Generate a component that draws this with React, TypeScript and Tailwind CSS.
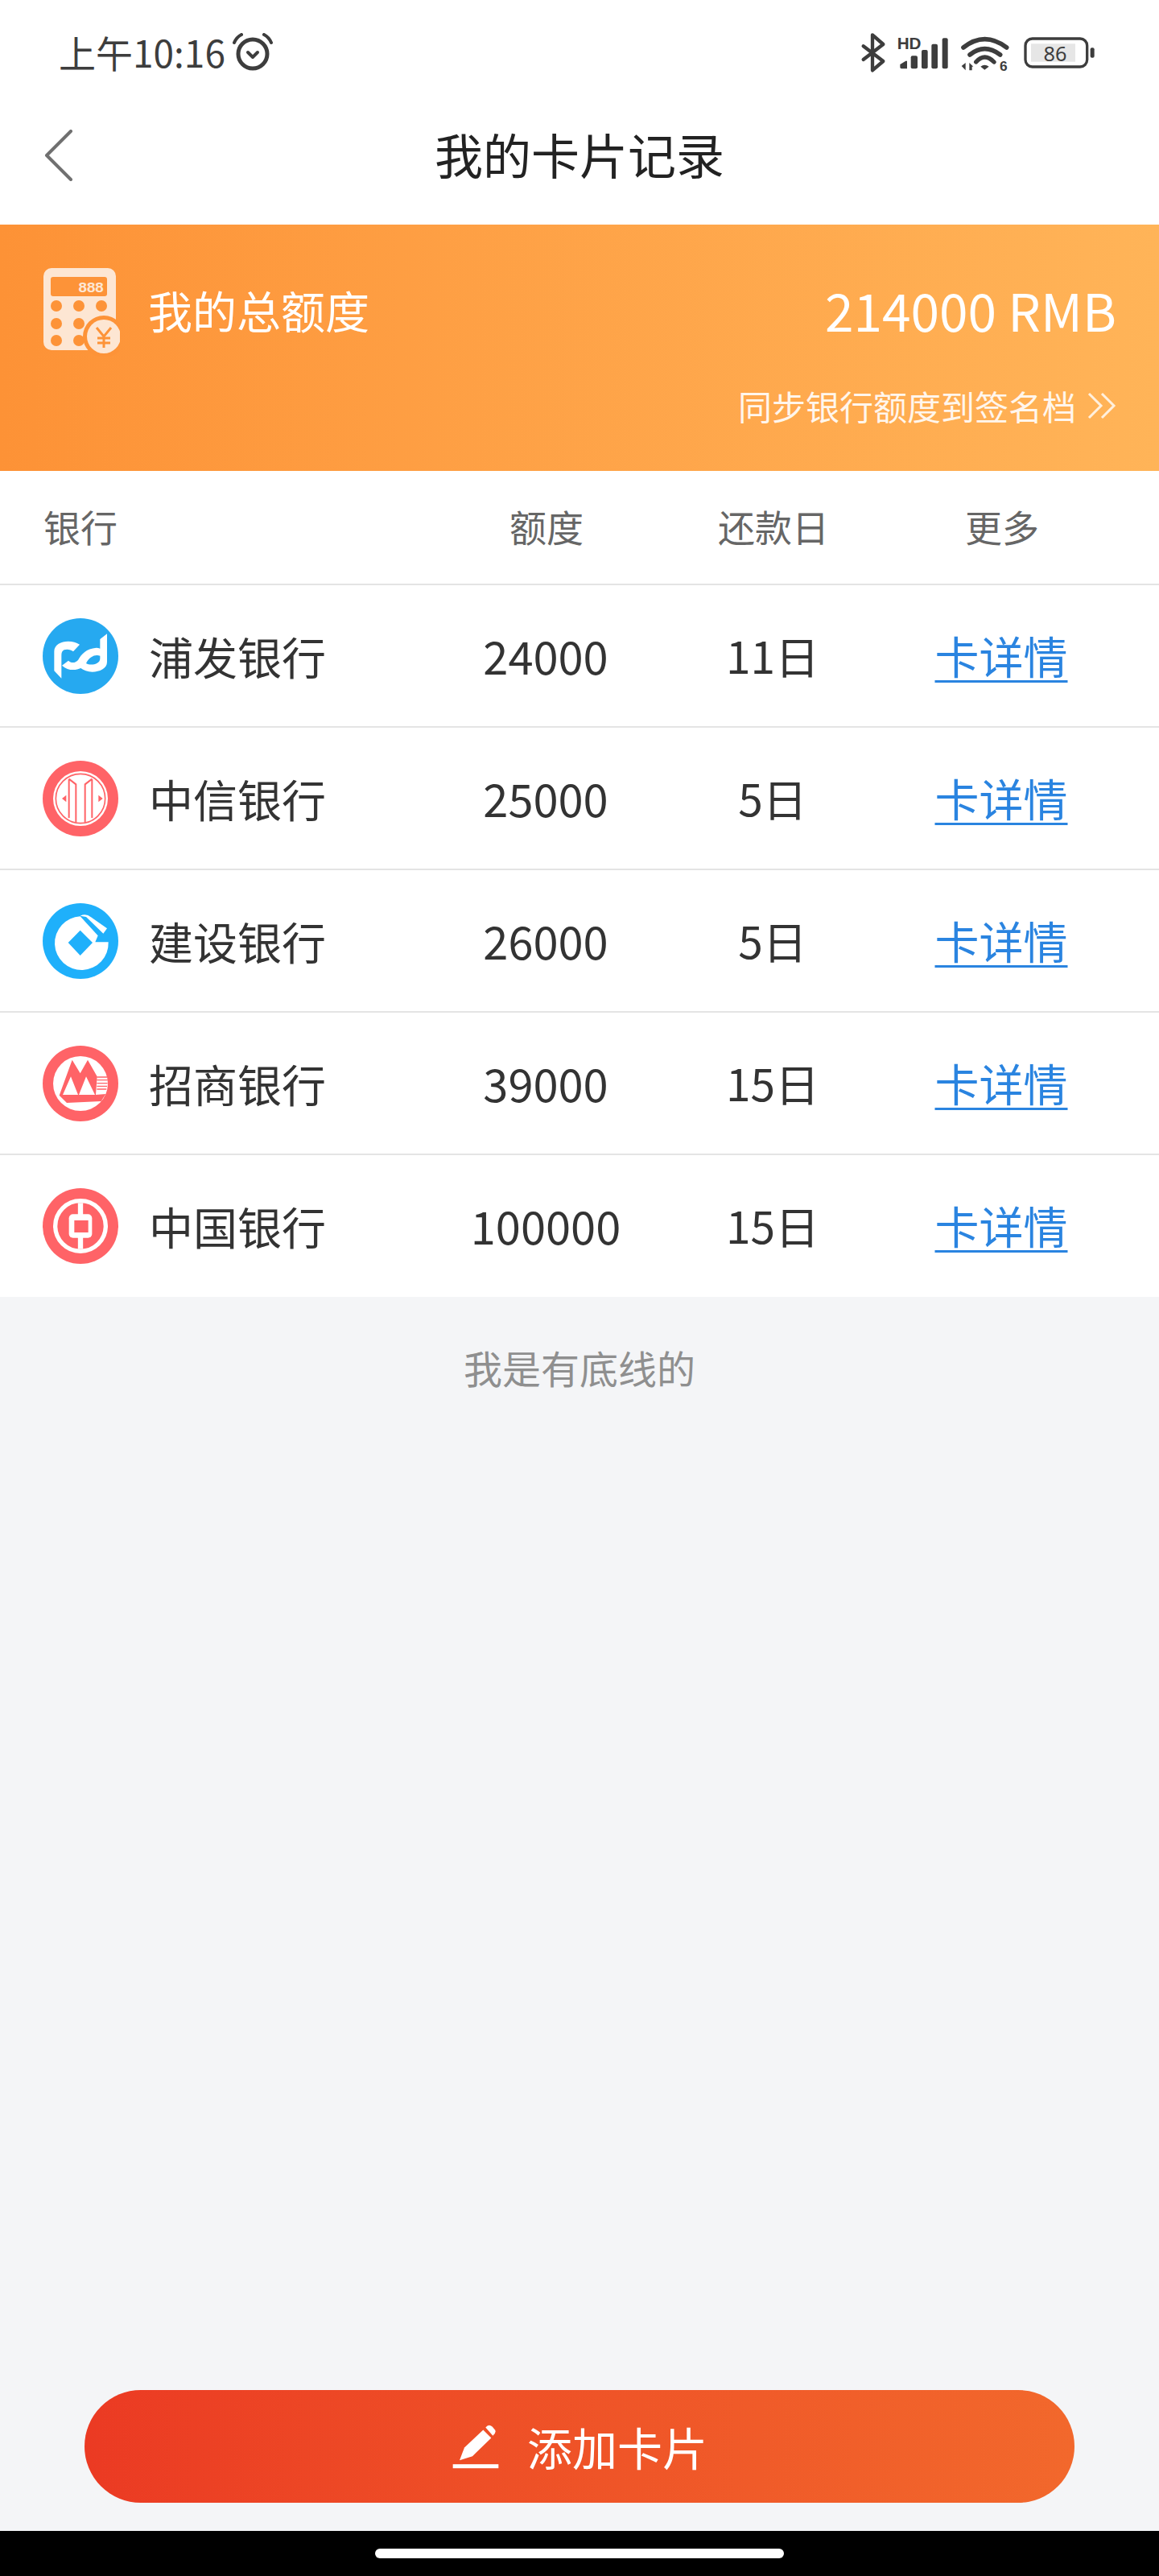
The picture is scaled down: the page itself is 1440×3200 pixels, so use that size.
import React from 'react'

const font = { fontFamily: '"Noto Sans CJK SC", "Noto Sans", sans-serif' }

function StatusIcons() {
  return (
    <svg width="480" height="120" viewBox="0 0 1440 360" fill="none" className="shrink-0">
      <path d="M338 172 412 228 372 262V130L412 165 338 222" stroke="#3d3d3d" strokeWidth="13" strokeLinecap="round" strokeLinejoin="round" />
      <text x="464" y="182" fontSize="62" fontWeight="700" fill="#3d3d3d" fontFamily="Liberation Sans">HD</text>
      <path d="M475 240 496 227H501V256H480Q475 256 475 250Z" fill="#3d3d3d" />
      <rect x="515" y="208" width="25" height="48" rx="6" fill="#3d3d3d" />
      <rect x="555" y="186" width="23" height="70" rx="6" fill="#3d3d3d" />
      <rect x="592" y="164" width="23" height="92" rx="6" fill="#3d3d3d" />
      <rect x="632" y="142" width="21" height="114" rx="6" fill="#3d3d3d" />
      <path d="M711 177Q790 115 872 177" stroke="#3d3d3d" strokeWidth="17" strokeLinecap="round" />
      <path d="M735 204Q790 160 848 204" stroke="#3d3d3d" strokeWidth="17" strokeLinecap="round" />
      <path d="M758 231Q790 195 825 231" stroke="#3d3d3d" strokeWidth="16" strokeLinecap="round" />
      <path d="M775 248Q790 236 806 248L790 260Z" fill="#3d3d3d" />
      <path d="M704 246 719 234V262ZM733 234 748 248H743V262H733Z" fill="#3d3d3d" />
      <text x="846" y="265" fontSize="52" fontWeight="700" fill="#3d3d3d" fontFamily="Liberation Sans">6</text>
      <rect x="942" y="144" width="230" height="105" rx="26" stroke="#3d3d3d" strokeWidth="10" />
      <rect x="963" y="163" width="165" height="67" fill="#e6e6e6" />
      <text x="1053" y="227" fontSize="76" textAnchor="middle" fill="#3d3d3d" fontFamily="Noto Sans">86</text>
      <rect x="1184" y="178" width="15" height="37" rx="6" fill="#3d3d3d" />
    </svg>
  )
}

function AlarmIcon() {
  return (
    <svg width="52" height="48" viewBox="287 42 52 48" fill="none" className="ml-[8px] mt-[1px] shrink-0">
      <circle cx="313" cy="68" r="18" stroke="#3d3d3d" strokeWidth="5" />
      <path d="M307 66 313 72 319 66" stroke="#3d3d3d" strokeWidth="4" strokeLinecap="round" strokeLinejoin="round" />
      <path d="M290 54Q293 47 299 44M336 54Q333 47 327 44" stroke="#3d3d3d" strokeWidth="4" strokeLinecap="round" />
    </svg>
  )
}

function CalcIcon() {
  return (
    <svg width="96" height="112" viewBox="52 330 96 112" className="shrink-0">
      <rect x="53" y="332" width="90" height="102" rx="10" fill="#fde6d3" />
      <rect x="62" y="343" width="70" height="24" rx="3" fill="#fd9338" />
      <text x="96" y="362" fontSize="19" fontWeight="700" fill="#fde6d3" fontFamily="Liberation Mono" letterSpacing="-1">888</text>
      {[379, 401, 422].map((y) =>
        [69, 97, 125].map((x) => <circle key={`${x}-${y}`} cx={x} cy={y} r="7" fill="#fd9338" />),
      )}
      <circle cx="128" cy="417" r="26" fill="#fd9338" />
      <circle cx="128" cy="417" r="21" fill="#fde6d3" />
      <path d="M119 406 128 417 137 406M128 417V431M120 419H136M120 425H136" stroke="#fd9338" strokeWidth="3" fill="none" />
    </svg>
  )
}

function PudongLogo() {
  return (
    <svg width="94" height="94" viewBox="100 82 282 282" fill="none">
      <circle cx="241" cy="223" r="141" fill="#26a9f0" />
      <path d="M143 205C143 180 170 168 195 168C212 168 225 172 238 180L214 206C205 198 190 196 180 200C172 204 170 210 170 222V306L143 278Z" fill="#fff" />
      <path d="M340 140V245C340 270 312 282 285 282C268 282 252 276 242 268C225 276 195 280 172 258L196 240C205 250 222 250 232 238C245 215 262 195 300 192C305 192 310 193 314 195V160ZM314 222C295 216 275 225 262 250C272 256 290 256 302 250C310 246 314 240 314 232Z" fill="#fff" fillRule="evenodd" />
    </svg>
  )
}

function CiticLogo() {
  return (
    <svg width="94" height="94" viewBox="100 72 282 282" fill="none">
      <circle cx="241" cy="213" r="141" fill="#ff6367" />
      <circle cx="241" cy="213" r="102" fill="#fff" />
      <circle cx="241" cy="213" r="92" stroke="#ff6367" strokeWidth="5" />
      <path d="M198 140V285M284 140V285M198 140 224 160V302M284 140 258 160V302" stroke="#ff6367" strokeWidth="6" />
      <path d="M172 213 188 200V226ZM324 213 308 200V226Z" fill="#ff6367" />
    </svg>
  )
}

function CcbLogo() {
  return (
    <svg width="94" height="94" viewBox="100 603 282 282" fill="none">
      <circle cx="241" cy="744" r="141" fill="#1fb0fb" />
      <path d="M240 652 306 724 296 748H345A100 100 0 1 1 240 652Z" fill="#fff" />
      <path d="M240 650Q262 640 280 655L340 697 326 716 262 654Z" fill="#fff" />
      <path d="M240 704 286 750 240 798 195 750Z" fill="#1fb0fb" />
    </svg>
  )
}

function CmbLogo() {
  return (
    <svg width="94" height="94" viewBox="100 55 282 282" fill="none">
      <circle cx="241" cy="196" r="141" fill="#ff6367" />
      <circle cx="241" cy="196" r="102" fill="#fff" />
      <path d="M210 108 240 158 268 108 303 170 298 238 335 235 318 262 190 268 162 240Z" fill="#ff6367" />
      <path d="M205 170 175 238H232ZM262 170 235 238H295Z" fill="#fff" />
      <path d="M302 172H340M302 183H342M302 195H342M302 206H340M302 217H338" stroke="#ff6367" strokeWidth="4" />
    </svg>
  )
}

function BocLogo() {
  return (
    <svg width="94" height="94" viewBox="100 585 282 282" fill="none">
      <circle cx="241" cy="726" r="141" fill="#ff6367" />
      <circle cx="241" cy="726" r="94" stroke="#fff" strokeWidth="16" />
      <path d="M241 640V812" stroke="#fff" strokeWidth="19" />
      <rect x="198" y="682" width="86" height="88" rx="15" fill="#fff" />
      <rect x="218" y="705" width="52" height="45" fill="#ff6367" />
    </svg>
  )
}

const banks = [
  { name: '浦发银行', limit: '24000', day: '11日', logo: <PudongLogo /> },
  { name: '中信银行', limit: '25000', day: '5日', logo: <CiticLogo /> },
  { name: '建设银行', limit: '26000', day: '5日', logo: <CcbLogo /> },
  { name: '招商银行', limit: '39000', day: '15日', logo: <CmbLogo /> },
  { name: '中国银行', limit: '100000', day: '15日', logo: <BocLogo /> },
]

export default function App() {
  return (
    <div className="flex h-[3200px] w-[1440px] flex-col overflow-hidden bg-[#f4f5f7]" style={font}>
      <header className="h-[279px] shrink-0 bg-white">
        <div className="flex h-[120px] items-center justify-between pl-[73px] text-[#3d3d3d]">
          <div className="flex items-center pt-[8px]">
            <span className="text-[46px] leading-none">上午10:16</span>
            <AlarmIcon />
          </div>
          <StatusIcons />
        </div>
        <div className="relative flex h-[146px] items-center justify-center">
          <svg width="36" height="64" viewBox="0 0 36 64" fill="none" className="absolute left-[55px] top-[41px]">
            <path d="M33 2 3 32 33 62" stroke="#707070" strokeWidth="4" strokeLinecap="round" strokeLinejoin="round" />
          </svg>
          <h1 className="mb-[4px] text-[60px] font-normal leading-none text-[#222]">我的卡片记录</h1>
        </div>
      </header>

      <section className="flex h-[306px] shrink-0 flex-col bg-gradient-to-r from-[#fd9236] to-[#ffb458] px-[53px] pt-[52px] text-white">
        <div className="flex items-start justify-between">
          <div className="flex items-center gap-[35px]">
            <CalcIcon />
            <span className="mb-[5px] text-[55px] leading-none">我的总额度</span>
          </div>
          <span className="mt-[21px] text-[64px] leading-none">214000 RMB</span>
        </div>
        <div className="mt-[40px] flex items-center justify-end gap-[14px] text-[42px] leading-none">
          <span className="text-[#fff6ec]">同步银行额度到签名档</span>
          <svg width="36" height="36" viewBox="0 0 36 36" fill="none">
            <path d="M2 3 17 18 2 33M18 3 33 18 18 33" stroke="#fff" strokeOpacity="0.8" strokeWidth="3" />
          </svg>
        </div>
      </section>

      <div className="grid h-[140px] shrink-0 grid-cols-[484px_282px_282px_286px] items-center bg-white pb-[4px] pl-[54px] text-center text-[46px] leading-none text-[#666]">
        <span className="text-left">银行</span>
        <span>额度</span>
        <span>还款日</span>
        <span>更多</span>
      </div>

      <div className="flex h-[886px] shrink-0 flex-col bg-white">
        {banks.map((b) => (
          <div
            key={b.name}
            className="grid h-[177px] shrink-0 grid-cols-[484px_282px_282px_286px] items-center border-t-[2px] border-[#e4e4e4] pl-[53px] text-center text-[55px] leading-none text-[#333]"
          >
            <div className="flex items-center gap-[38px] text-left">
              {b.logo}
              <span>{b.name}</span>
            </div>
            <span className="pb-[2px] text-[56px]">{b.limit}</span>
            <span className="pb-[2px]">{b.day}</span>
            <a className="pb-[2px] text-[#2a84e0] underline decoration-[3px] underline-offset-[8px]">卡详情</a>
          </div>
        ))}
      </div>

      <p className="mt-[63px] text-center text-[48px] leading-none text-[#8f8f8f]">我是有底线的</p>

      <div className="mt-auto flex justify-center pb-[35px]">
        <button className="flex h-[140px] w-[1230px] items-center justify-center gap-[34px] rounded-full bg-gradient-to-r from-[#eb3a23] to-[#f2682c] text-[56px] leading-none text-white">
          <svg width="60" height="57" viewBox="120 30 180 170" className="shrink-0">
            <path d="M150 165 168 118 238 52 268 82 198 150Z" fill="#fff" />
            <path d="M247 43Q258 28 272 40L282 52Q288 62 274 74Z" fill="#fff" />
            <rect x="125" y="180" width="170" height="15" fill="#fff" />
          </svg>
          <span>添加卡片</span>
        </button>
      </div>

      <div className="flex h-[56px] shrink-0 items-center justify-center bg-black">
        <div className="h-[12px] w-[508px] rounded-full bg-white" />
      </div>
    </div>
  )
}
